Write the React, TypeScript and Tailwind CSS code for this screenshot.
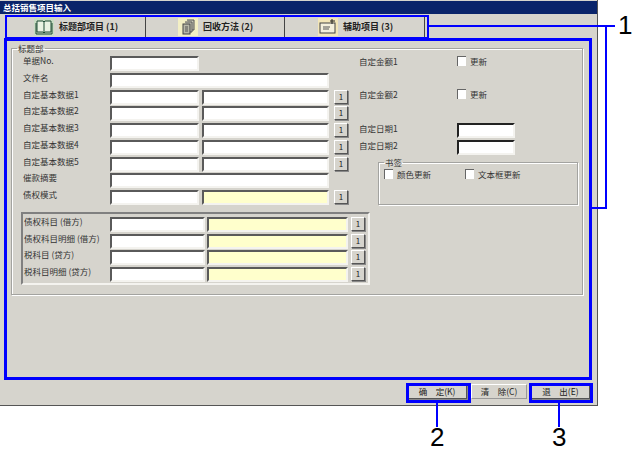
const font = "font-['Noto_Sans_CJK_SC','Liberation_Sans',sans-serif]";
const sunken =
  "border-2 border-t-[#5a5a5a] border-l-[#5a5a5a] border-r-[#f4f3ef] border-b-[#f4f3ef]";
const raised =
  "border border-t-white border-l-white border-r-[#555] border-b-[#555] shadow-[1px_1px_0_#888]";

function Input({ w, yellow, dark }: { w: string; yellow?: boolean; dark?: boolean }) {
  return (
    <div
      className={`${w} h-[15px] shrink-0 ${sunken} ${yellow ? "bg-[#ffffcc]" : "bg-white"} ${
        dark ? "border-t-[#222] border-l-[#222]" : ""
      }`}
    />
  );
}

function SmallBtn() {
  return (
    <div
      className={`w-[14px] h-[14px] shrink-0 ${raised} bg-[#d6d4cd] flex items-center justify-center text-[8px] leading-none text-[#222]`}
    >
      1
    </div>
  );
}

function Check({ label, w }: { label: string; w?: string }) {
  return (
    <div className={`flex items-center gap-[4px] ${w ?? ""}`}>
      <div className="w-[9px] h-[10px] bg-white border-t border-l border-t-[#666] border-l-[#666]" />
      <span className="text-[8.5px] leading-[10px] text-[#333]">{label}</span>
    </div>
  );
}

function Row({ label, children }: { label: string; children?: React.ReactNode }) {
  return (
    <div className="h-[16.75px] flex items-start pl-[11px]">
      <div className="w-[87px] text-[8.5px] leading-[9px] text-[#333] whitespace-nowrap">{label}</div>
      {children}
    </div>
  );
}

function BaseRow({ label, yellow }: { label: string; yellow?: boolean }) {
  return (
    <Row label={label}>
      <Input w="w-[89px]" />
      <div className="w-[3px]" />
      <Input w="w-[127px]" yellow={yellow} />
      <div className="w-[5px]" />
      <SmallBtn />
    </Row>
  );
}

function AccountRow({ label }: { label: string }) {
  return (
    <div className="h-[16.75px] flex items-start pl-[1px]">
      <div className="w-[86px] text-[8.5px] leading-[9px] text-[#333] whitespace-nowrap">{label}</div>
      <Input w="w-[95px]" />
      <div className="w-[2px]" />
      <Input w="w-[141px]" yellow />
      <div className="w-[3px]" />
      <SmallBtn />
    </div>
  );
}

function BookIcon() {
  return (
    <svg width="20" height="18" viewBox="0 0 20 18" className="shrink-0">
      <rect width="20" height="18" fill="#c9dcc4" />
      <path d="M3 3 H9 L10 4 L11 3 H17 V14 H11 L10 15 L9 14 H3 Z" fill="#e9f2e2" stroke="#1d4a33" />
      <path d="M10 4 V15 M2 5 V16 H18 V5" fill="none" stroke="#1d4a33" />
    </svg>
  );
}

function DocsIcon() {
  return (
    <svg width="20" height="18" viewBox="0 0 20 18" className="shrink-0">
      <rect width="20" height="18" fill="#f3efc4" />
      <path d="M9 2 H16 V12 H14 M7 4 H14 V14 H12" fill="#c9c9b8" stroke="#555" />
      <rect x="5" y="6" width="7" height="10" fill="#b8b8a8" stroke="#444" />
      <path d="M7 9 H10 M7 11 H10 M7 13 H10" stroke="#555" />
    </svg>
  );
}

function NoteIcon() {
  return (
    <svg width="20" height="18" viewBox="0 0 20 18" className="shrink-0">
      <rect width="20" height="18" fill="#f3e6b8" />
      <rect x="2" y="5" width="15" height="10" fill="#f4f0dc" stroke="#444" />
      <path d="M5 9 H12 M5 11 H11" stroke="#555" />
      <path d="M14 1 V6 M12 3 H17" stroke="#222" />
    </svg>
  );
}

function Tab({ w, icon, label, gap }: { w: string; icon: React.ReactNode; label: string; gap: string }) {
  return (
    <div
      className={`${w} h-[21px] flex items-center ${gap} border-r border-r-[#444] border-t border-t-white bg-[#d6d4cd]`}
    >
      {icon}
      <span className="ml-[5px] text-[9px] font-bold text-[#222] whitespace-nowrap">{label}</span>
    </div>
  );
}

function FootBtn({ w, label, flat }: { w: string; label: string; flat?: boolean }) {
  return (
    <div
      className={`${w} h-[15px] ${flat ? "border border-t-white border-l-white border-r-[#999] border-b-[#999]" : raised} bg-[#d6d4cd] flex items-center justify-center text-[8.5px] leading-none text-[#222] whitespace-pre`}
    >
      {label}
    </div>
  );
}

export default function App() {
  return (
    <div className={`relative w-[635px] h-[454px] bg-white overflow-hidden ${font}`}>
      <div className="w-[598px] h-[406px] bg-[#d6d4cd] flex flex-col border-r border-b border-r-[#555] border-b-[#555]">
        <div className="mt-[1px] h-[13px] bg-[#0a246a] text-white text-[8.5px] font-bold leading-[13px] pl-[3px]">
          总括销售项目输入
        </div>

        <div className="mt-[2px] ml-[6px] flex h-[21px]">
          <Tab w="w-[140px]" gap="pl-[28px]" icon={<BookIcon />} label="标题部项目 (1)" />
          <Tab w="w-[139px]" gap="pl-[32px]" icon={<DocsIcon />} label="回收方法 (2)" />
          <Tab w="w-[140px]" gap="pl-[33px]" icon={<NoteIcon />} label="辅助项目 (3)" />
        </div>

        <fieldset className="mt-[6px] ml-[11px] w-[572px] h-[252px] border border-[#a3a3a0] shadow-[inset_1px_1px_0_#fff,1px_1px_0_#fff]">
          <legend className="ml-[5px] px-[1px] text-[8.5px] leading-[10px] text-[#333]">标题部</legend>
          <div className="mt-[3px] flex">
            <div className="w-[347px] shrink-0">
              <Row label="单据No.">
                <Input w="w-[89px]" />
              </Row>
              <Row label="文件名">
                <Input w="w-[219px]" />
              </Row>
              <BaseRow label="自定基本数据1" />
              <BaseRow label="自定基本数据2" />
              <BaseRow label="自定基本数据3" />
              <BaseRow label="自定基本数据4" />
              <BaseRow label="自定基本数据5" />
              <Row label="催款摘要">
                <Input w="w-[219px]" />
              </Row>
              <BaseRow label="债权模式" yellow />
            </div>

            <div className="flex-1 text-[8.5px] leading-[10px] text-[#333]">
              <div className="flex h-[33px] items-start">
                <div className="w-[98px]">自定金额1</div>
                <Check label="更新" />
              </div>
              <div className="flex h-[34px] items-start">
                <div className="w-[98px]">自定金额2</div>
                <Check label="更新" />
              </div>
              <div className="flex h-[16.5px] items-start">
                <div className="w-[98px]">自定日期1</div>
                <Input w="w-[58px]" dark />
              </div>
              <div className="flex h-[16.5px] items-start">
                <div className="w-[98px]">自定日期2</div>
                <Input w="w-[58px]" dark />
              </div>
              <fieldset className="ml-[19px] mt-[1px] w-[200px] h-[48px] border border-[#a3a3a0] shadow-[inset_1px_1px_0_#fff,1px_1px_0_#fff]">
                <legend className="ml-[5px] px-[1px]">书签</legend>
                <div className="flex pl-[5px] mt-[2px]">
                  <Check label="颜色更新" w="w-[81px]" />
                  <Check label="文本框更新" />
                </div>
              </fieldset>
            </div>
          </div>

          <div className="ml-[9px] mt-[5px] w-[349px] h-[73px] pt-[3px] border-2 border-t-[#808080] border-l-[#808080] border-r-[#f4f3ef] border-b-[#f4f3ef]">
            <AccountRow label="债权科目 (借方)" />
            <AccountRow label="债权科目明细 (借方)" />
            <AccountRow label="税科目 (贷方)" />
            <AccountRow label="税科目明细 (贷方)" />
          </div>
        </fieldset>

        <div className="mt-auto mb-[6px] pr-[7px] flex justify-end gap-[4px]">
          <FootBtn w="w-[60px]" label="确　定(K)" />
          <FootBtn w="w-[56px]" label="清　除(C)" flat />
          <FootBtn w="w-[59px]" label="退　出(E)" />
        </div>
      </div>

      {/* blue callouts drawn over the screenshot */}
      <div className="absolute left-[5px] top-[15px] w-[424px] h-[24px] border-[2px] border-[#0000ff]" />
      <div className="absolute left-[4px] top-[38px] w-[588px] h-[342px] border-[3px] border-[#0000ff]" />
      <div className="absolute left-[406px] top-[383px] w-[65px] h-[20px] border-[3px] border-[#0000ff]" />
      <div className="absolute left-[529px] top-[383px] w-[64px] h-[20px] border-[3px] border-[#0000ff]" />
      <div className="absolute left-[429px] top-[25px] w-[186px] h-[2px] bg-[#0000ff]" />
      <div className="absolute left-[605px] top-[26px] w-[2px] h-[183px] bg-[#0000ff]" />
      <div className="absolute left-[591px] top-[207px] w-[16px] h-[2px] bg-[#0000ff]" />
      <div className="absolute left-[436px] top-[403px] w-[2px] h-[24px] bg-[#0000ff]" />
      <div className="absolute left-[558px] top-[403px] w-[2px] h-[24px] bg-[#0000ff]" />
      <div className="absolute left-[618px] top-[10px] text-[26px] leading-[30px] text-black font-['Liberation_Sans']">1</div>
      <div className="absolute left-[430px] top-[422px] text-[26px] leading-[30px] text-black font-['Liberation_Sans']">2</div>
      <div className="absolute left-[552px] top-[422px] text-[26px] leading-[30px] text-black font-['Liberation_Sans']">3</div>
    </div>
  );
}
